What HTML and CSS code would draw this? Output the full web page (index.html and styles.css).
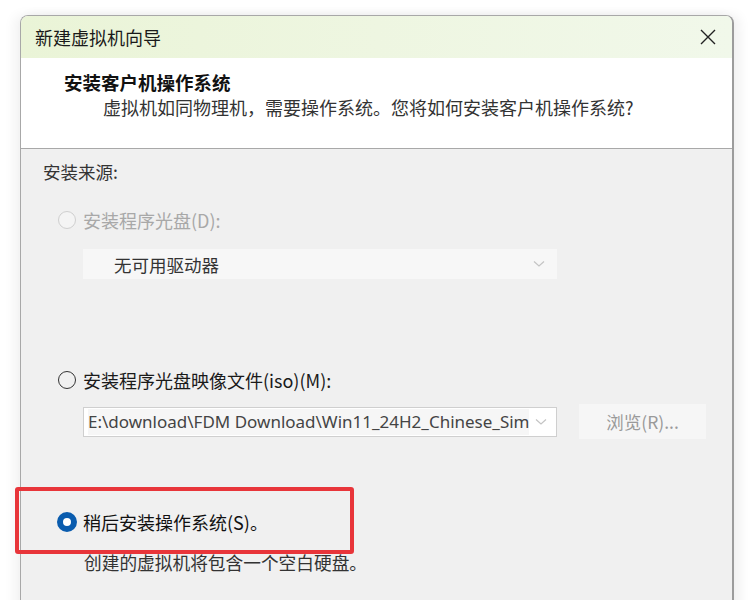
FILE: index.html
```html
<!DOCTYPE html>
<html lang="zh-CN">
<head>
<meta charset="utf-8">
<title>新建虚拟机向导</title>
<link rel="stylesheet" href="styles.css">
</head>
<body>
<div class="stage">
  <div class="window">
    <div class="titlebar">
      <span class="title">新建虚拟机向导</span>
      <span class="close">
        <svg width="18" height="18" viewBox="0 0 18 18"><path d="M2 2 L16 16 M16 2 L2 16" stroke="#222" stroke-width="1.4" fill="none"/></svg>
      </span>
    </div>
    <div class="header">
      <div class="h-title">安装客户机操作系统</div>
      <div class="h-sub">虚拟机如同物理机，需要操作系统。您将如何安装客户机操作系统?</div>
    </div>
    <div class="content">
      <div class="section-label">安装来源:</div>

      <div class="option disabled">
        <span class="radio"></span>
        <span class="label">安装程序光盘(D):</span>
      </div>
      <div class="select select-disabled">
        <span class="select-text">无可用驱动器</span>
        <svg class="chev" width="12" height="8" viewBox="0 0 12 8"><path d="M1 1.5 L6 6 L11 1.5" stroke="#c4c4c4" stroke-width="1.2" fill="none"/></svg>
      </div>

      <div class="option option-iso">
        <span class="radio"></span>
        <span class="label">安装程序光盘映像文件(iso)(M):</span>
      </div>
      <div class="iso-row">
        <div class="select select-path">
          <span class="path-text">E:\download\FDM Download\Win11_24H2_Chinese_Sim</span>
          <svg class="chev" width="12" height="8" viewBox="0 0 12 8"><path d="M1 1.5 L6 6 L11 1.5" stroke="#c4c4c4" stroke-width="1.2" fill="none"/></svg>
        </div>
        <div class="btn">浏览(R)...</div>
      </div>

      <div class="option option-later checked">
        <span class="radio"></span>
        <span class="label">稍后安装操作系统(S)。</span>
      </div>
      <div class="desc">创建的虚拟机将包含一个空白硬盘。</div>
    </div>
  </div>
  <div class="highlight"></div>
</div>
</body>
</html>
```

FILE: styles.css
```css
html, body {
  margin: 0;
  padding: 0;
  background: #ffffff;
  overflow: hidden;
}

body {
  font-family: "Noto Sans CJK SC", "Noto Sans", sans-serif;
  color: #222;
}

.stage {
  position: relative;
  padding: 15px 0 0 20px;
  width: 748px;
  height: 600px;
  box-sizing: border-box;
}

.window {
  width: 714px;
  box-sizing: border-box;
  border: 1px solid #a8a8a8;
  border-right: 2px solid #9c9c9c;
  border-radius: 8px 8px 0 0;
  overflow: hidden;
  box-shadow: -6px 0 12px rgba(0,0,0,0.05), 6px 0 12px rgba(0,0,0,0.06);
}

.titlebar {
  height: 42px;
  display: flex;
  align-items: center;
  justify-content: space-between;
  padding: 0 14px 0 14px;
  background: linear-gradient(90deg, #eaf4d7 0%, #eef6e1 50%, #f1f8ea 100%);
}

.title {
  font-size: 18px;
  color: #1a1a1a;
  line-height: 24px;
}

.close {
  display: flex;
  width: 18px;
  height: 18px;
  margin-right: 1px;
}

.header {
  height: 91px;
  background: #ffffff;
  border-bottom: 1px solid #a8a8a8;
  padding: 12px 0 0 43px;
  box-sizing: border-box;
}

.h-title {
  font-size: 18.5px;
  font-weight: 700;
  line-height: 24px;
  color: #111;
}

.h-sub {
  font-size: 18px;
  line-height: 27px;
  padding-left: 39px;
  color: #333;
}

.content {
  background: #f0f0f0;
  height: 470px;
  padding: 11px 0 0 22px;
  box-sizing: border-box;
}

.section-label {
  font-size: 17.5px;
  line-height: 24px;
  color: #333;
}

.option {
  display: flex;
  align-items: center;
  height: 24px;
  margin-top: 24px;
  padding-left: 15px;
}

.radio {
  width: 18px;
  height: 18px;
  border-radius: 50%;
  border: 1.5px solid #333;
  box-sizing: border-box;
  margin-right: 7px;
  flex: none;
}

.label {
  font-size: 18px;
  line-height: 24px;
  color: #1a1a1a;
}

.disabled .radio {
  border-color: #cfcfcf;
  background: #f4f4f4;
}

.disabled .label {
  color: #a8a8a8;
}

.checked .radio {
  width: 20px;
  height: 20px;
  border: 6px solid #0a5cae;
  background: #ffffff;
  margin-left: -1px;
  margin-right: 6px;
}

.checked .label {
  color: #111;
}

.select {
  display: flex;
  align-items: center;
  justify-content: space-between;
  box-sizing: border-box;
  width: 474px;
  height: 30px;
  margin-left: 40px;
}

.select-disabled {
  margin-top: 17px;
  background: #f7f7f7;
  padding: 0 12px 0 31px;
}

.select-text {
  font-size: 17.5px;
  color: #333;
}

.option-iso {
  margin-top: 89px;
}

.iso-row {
  display: flex;
  align-items: center;
  margin-top: 12px;
  height: 35px;
  gap: 22px;
}

.select-path {
  background: #ffffff;
  border: 1px solid #cfcfcf;
  padding: 0 9px 0 4px;
  margin-top: 1px;
  overflow: hidden;
}

.path-text {
  display: block;
  font-family: "Noto Sans", "Open Sans", sans-serif;
  font-size: 17px;
  line-height: 26px;
  color: #444;
  white-space: nowrap;
  overflow: hidden;
  width: 441px;
  background: #f6f6f6;
}

.chev {
  flex: none;
}

.btn {
  width: 127px;
  height: 35px;
  display: flex;
  align-items: center;
  justify-content: center;
  background: #f6f6f6;
  font-size: 17.5px;
  color: #9a9a9a;
}

.option-later {
  margin-top: 71px;
}

.desc {
  margin-top: 16px;
  padding-left: 41px;
  font-size: 17.7px;
  line-height: 24px;
  color: #333;
}

.highlight {
  position: absolute;
  left: 15px;
  top: 487px;
  width: 339px;
  height: 67px;
  box-sizing: border-box;
  border: 4px solid #e8353a;
  border-radius: 3px;
}
```
